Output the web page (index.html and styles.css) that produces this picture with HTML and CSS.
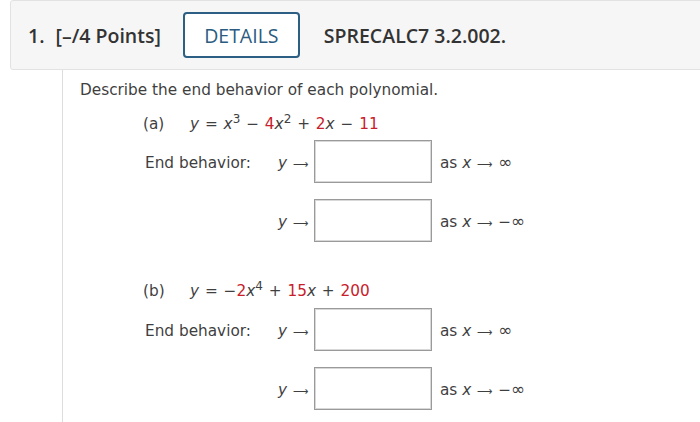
FILE: index.html
```html
<!DOCTYPE html>
<html>
<head>
<meta charset="utf-8">
<link rel="stylesheet" href="styles.css">
</head>
<body>
<div class="header">
  <span class="num">1.</span>
  <span class="pts">[–/4 Points]</span>
  <span class="details">DETAILS</span>
  <span class="code">SPRECALC7 3.2.002.</span>
</div>
<div class="content">
  <p class="intro">Describe the end behavior of each polynomial.</p>

  <div class="part part-a">
    <span class="plabel">(a)</span>
    <span class="eq"><i>y</i> = <i>x</i><sup>3</sup> − <span class="r">4</span><i>x</i><sup>2</sup> + <span class="r">2</span><i>x</i> − <span class="r">11</span></span>
  </div>
  <div class="rows">
    <span class="lbl">End behavior:</span>
    <span class="arr"><i>y</i> <span class="la">⟶</span></span>
    <span class="box"></span>
    <span class="as">as <i>x</i> <span class="la">⟶</span> <span class="inf">∞</span></span>
    <span class="lbl"></span>
    <span class="arr"><i>y</i> <span class="la">⟶</span></span>
    <span class="box"></span>
    <span class="as">as <i>x</i> <span class="la">⟶</span> −<span class="inf">∞</span></span>
  </div>

  <div class="part part-b">
    <span class="plabel">(b)</span>
    <span class="eq"><i>y</i> = −<span class="r">2</span><i>x</i><sup>4</sup> + <span class="r">15</span><i>x</i> + <span class="r">200</span></span>
  </div>
  <div class="rows">
    <span class="lbl">End behavior:</span>
    <span class="arr"><i>y</i> <span class="la">⟶</span></span>
    <span class="box"></span>
    <span class="as">as <i>x</i> <span class="la">⟶</span> <span class="inf">∞</span></span>
    <span class="lbl"></span>
    <span class="arr"><i>y</i> <span class="la">⟶</span></span>
    <span class="box"></span>
    <span class="as">as <i>x</i> <span class="la">⟶</span> −<span class="inf">∞</span></span>
  </div>
</div>
</body>
</html>
```

FILE: styles.css
```css
html, body {
  margin: 0;
  padding: 0;
  background: #ffffff;
  overflow: hidden;
}
body {
  width: 700px;
  height: 422px;
}
.header {
  box-sizing: border-box;
  margin-left: 10px;
  margin-right: -10px;
  height: 70px;
  background: #f6f6f6;
  border: 1px solid #e2e2e2;
  border-radius: 3px;
  display: flex;
  align-items: center;
  padding-left: 17px;
  font-family: "Open Sans", "Liberation Sans", sans-serif;
  font-size: 19.5px;
  font-weight: 600;
  color: #333333;
}
.num {
  margin-right: 11px;
}
.details {
  box-sizing: border-box;
  margin-left: 22px;
  width: 117px;
  height: 46px;
  border: 2px solid #2d5e84;
  border-radius: 4px;
  background: #ffffff;
  color: #2b5b80;
  font-weight: 400;
  display: flex;
  align-items: center;
  justify-content: center;
}
.code {
  margin-left: 24px;
}
.content {
  margin-left: 62px;
  border-left: 1px solid #dddddd;
  height: 352px;
  padding-left: 17px;
  padding-top: 10px;
  box-sizing: border-box;
  font-family: "DejaVu Sans", Verdana, sans-serif;
  font-size: 15.3px;
  color: #3f3f3f;
}
.intro {
  margin: 0;
  line-height: 20px;
}
.part {
  display: flex;
  align-items: center;
  height: 20px;
  line-height: 20px;
  padding-left: 63px;
}
.part-a {
  margin-top: 14px;
}
.part-b {
  margin-top: 39px;
}
.plabel {
  width: 47px;
}
.eq {
  word-spacing: 1px;
}
.eq i, .rows i {
  font-style: italic;
}
.eq sup {
  font-size: 12px;
  line-height: 0;
  vertical-align: 6px;
}
.r {
  color: #c8202a;
}
.la {
  font-size: 12px;
  display: inline-block;
  transform: scaleX(0.9);
}
.inf {
  font-size: 17px;
  line-height: 0;
}
.rows {
  display: grid;
  grid-template-columns: 133px 36px 118px auto;
  grid-auto-rows: 43px;
  row-gap: 16px;
  align-items: center;
  margin-left: 65px;
  margin-top: 6px;
}
.lbl, .arr, .as {
  position: relative;
  top: 1px;
}
.part-b + .rows {
  margin-top: 7px;
}
.box {
  box-sizing: border-box;
  height: 43px;
  border: 1px solid #9a9a9a;
  box-shadow: inset 0 0 0 1px #d8d8d8;
  background: #ffffff;
}
.as {
  padding-left: 8px;
}
```
